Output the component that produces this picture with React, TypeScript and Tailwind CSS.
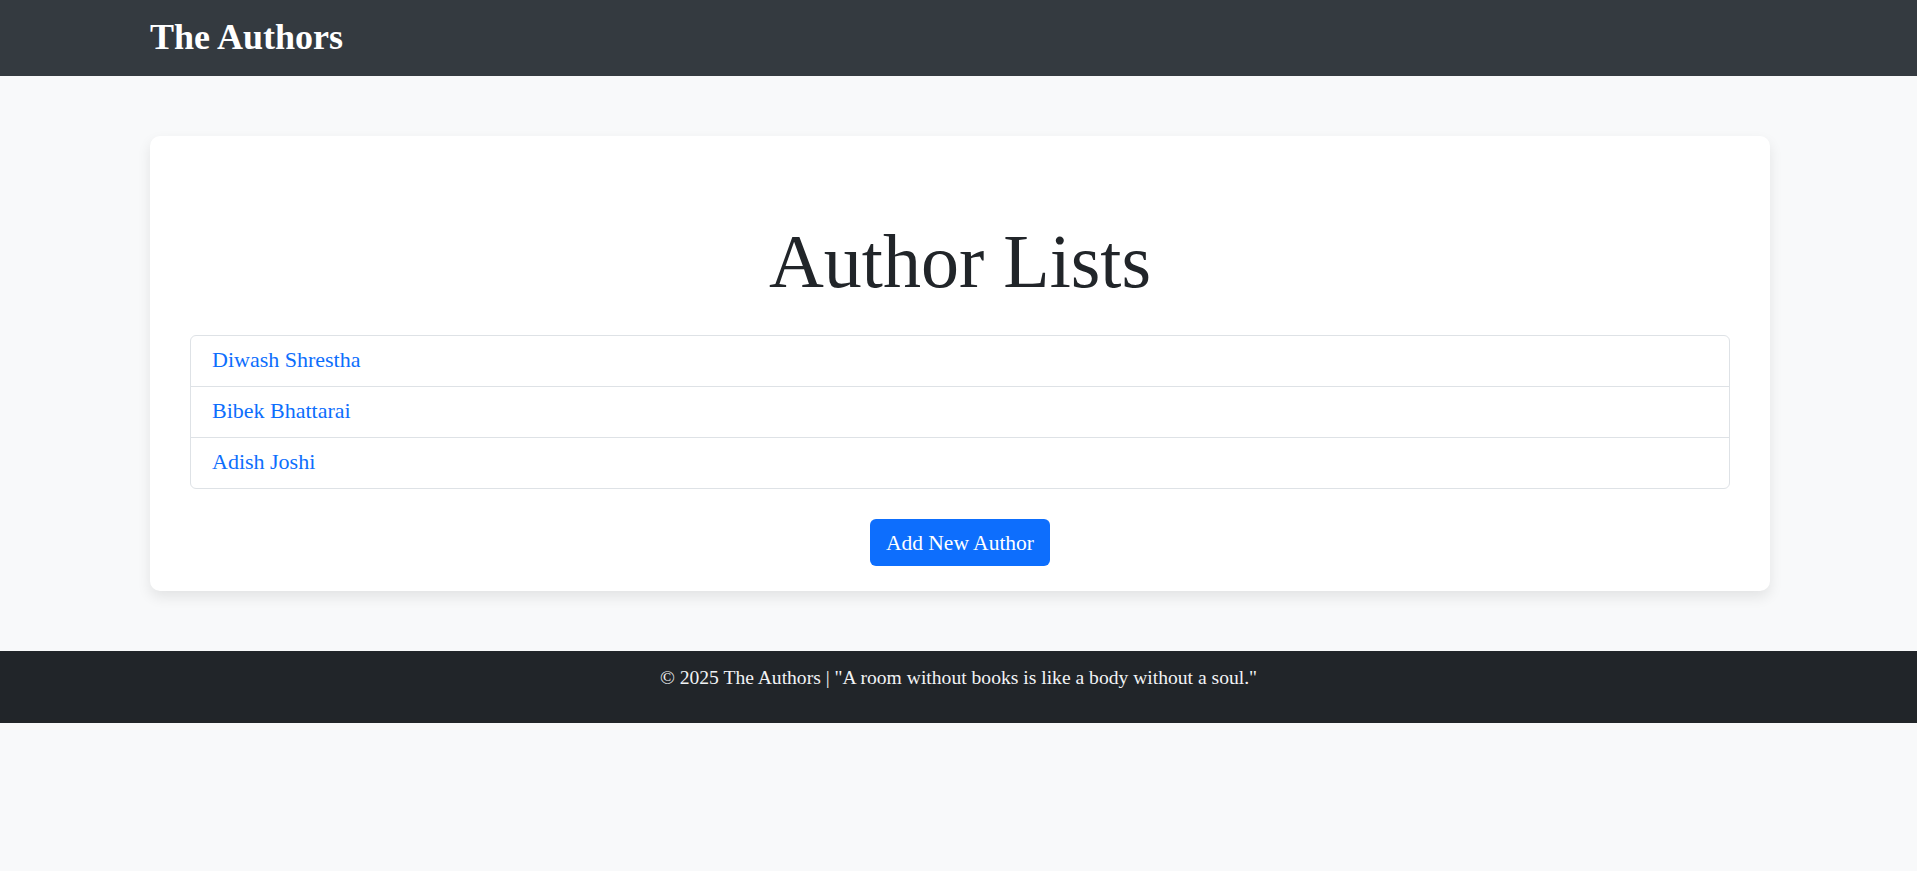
import React from "react";

const serif = "font-['Liberation_Serif','Times_New_Roman',serif]";

const authors = ["Diwash Shrestha", "Bibek Bhattarai", "Adish Joshi"];

export default function App() {
  return (
    <div className={`min-h-[871px] bg-[#f8f9fa] ${serif}`}>
      <nav className="h-[76px] bg-[#343a40]">
        <div className="ml-[150px] w-[1620px] pt-[17px]">
          <a href="#" className="text-[36px] leading-[40px] font-bold text-white">
            The Authors
          </a>
        </div>
      </nav>

      <main className="py-[60px]">
        <div className="ml-[150px] w-[1620px] rounded-[10px] bg-white px-[40px] pt-[80px] pb-[25px] shadow-[0_6px_14px_rgba(0,0,0,0.09)]">
          <h1 className="text-center text-[76px] leading-[91px] font-normal text-[#212529]">
            Author Lists
          </h1>
          <ul className="mt-[28px] rounded-[6px] border border-[#dee2e6]">
            {authors.map((a, i) => (
              <li
                key={a}
                className={`pl-[21px] pt-[9px] pb-[11px] ${i > 0 ? "border-t border-[#dee2e6]" : ""}`}
              >
                <a href="#" className="text-[22px] leading-[30px] text-[#0d6efd]">
                  {a}
                </a>
              </li>
            ))}
          </ul>
          <div className="mt-[30px] flex justify-center">
            <button className="h-[47px] rounded-[6px] bg-[#0d6efd] px-[16px] text-[21.5px] leading-[30px] text-white">
              Add New Author
            </button>
          </div>
        </div>
      </main>

      <footer className="h-[72px] bg-[#212529] pt-[15px] text-center">
        <p className="text-[19.6px] leading-[24px] text-[#f1f3f5]">
          © 2025 The Authors | "A room without books is like a body without a soul."
        </p>
      </footer>
    </div>
  );
}
